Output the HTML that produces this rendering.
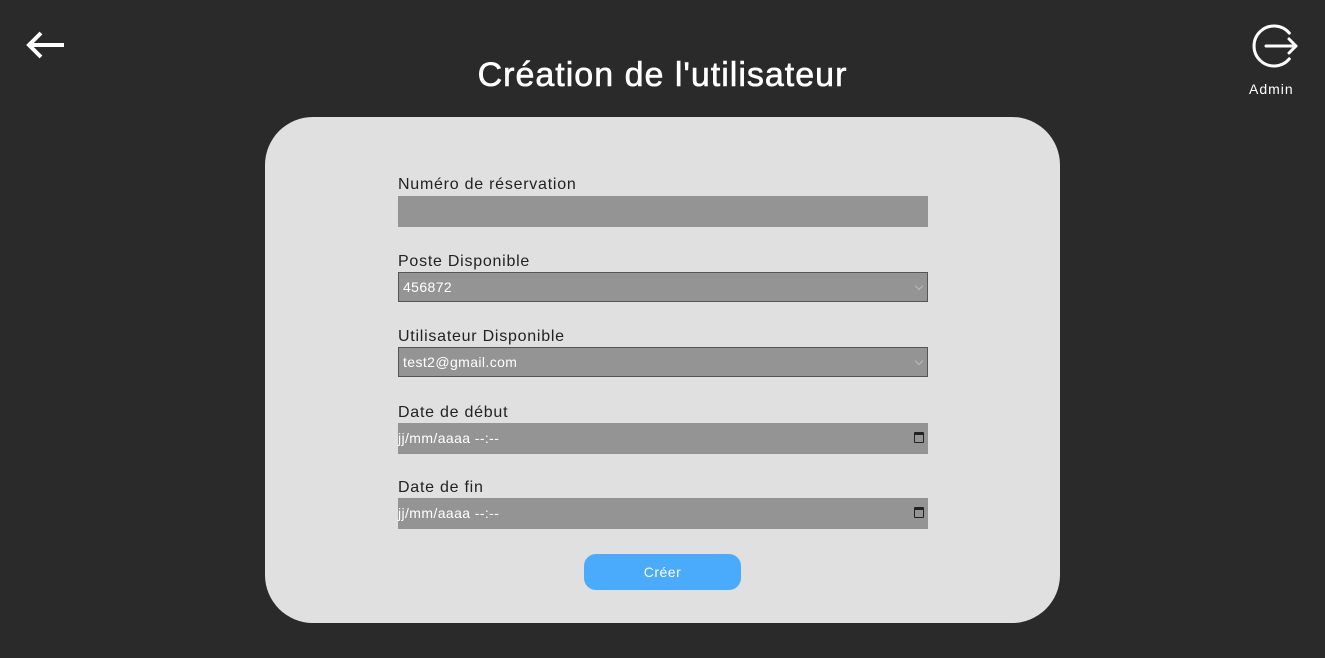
<!DOCTYPE html>
<html><head><meta charset="utf-8"><style>
*{margin:0;padding:0;box-sizing:border-box}
body{width:1325px;height:658px;background:#2a2a2a;font-family:"Liberation Sans",sans-serif;position:relative;overflow:hidden}
h1{position:absolute;left:0;width:1325px;top:56px;text-align:center;color:#fff;font-size:34px;font-weight:normal;letter-spacing:1px;-webkit-text-stroke:0.6px #fff}
.card{position:absolute;left:265px;top:117px;width:795px;height:506px;background:#e0e0e0;border-radius:48px}
.lbl{position:absolute;left:398px;color:#222;font-size:16px;letter-spacing:0.75px}
.fld{position:absolute;left:398px;width:530px;height:31px;background:#949494;color:#fff;font-size:14px;letter-spacing:0.4px;padding-left:4px;line-height:30px}
.sel{border:1px solid #555;height:30px;line-height:28px}
.chev{position:absolute;right:5px;top:10px;width:6px;height:6px;border-right:1px solid #bbb;border-bottom:1px solid #bbb;transform:rotate(45deg)}
.cal{position:absolute;right:4px;top:9px;width:10px;height:11px;border:1.5px solid #222;border-top-width:3px;border-radius:1px}
.btn{position:absolute;left:584px;top:554px;width:157px;height:36px;background:#4aabfc;border-radius:12px;color:#fff;font-size:14px;letter-spacing:0.5px;text-align:center;line-height:36px}
</style></head><body>
<svg style="position:absolute;left:26px;top:30px" width="40" height="30" viewBox="0 0 40 30"><path d="M38 15H3M15 3L3 15L15 27" stroke="#fff" stroke-width="4" fill="none"/></svg>
<svg style="position:absolute;left:1248px;top:22px" width="52" height="50" viewBox="0 0 52 50"><path d="M41.3 11.1A20 20 0 1 0 41.3 36.9" stroke="#fff" stroke-width="3" fill="none" stroke-linecap="round"/><path d="M18 24H48M41 17L48 24L41 31" stroke="#fff" stroke-width="3" fill="none" stroke-linecap="round" stroke-linejoin="round"/></svg>
<div style="position:absolute;left:1249px;top:81px;color:#fff;font-size:14px;letter-spacing:1px">Admin</div>
<h1>Création de l'utilisateur</h1>
<div class="card"></div>
<div class="lbl" style="top:176px">Numéro de réservation</div>
<div class="fld" style="top:196px"></div>
<div class="lbl" style="top:253px">Poste Disponible</div>
<div class="fld sel" style="top:272px">456872<span class="chev"></span></div>
<div class="lbl" style="top:328px">Utilisateur Disponible</div>
<div class="fld sel" style="top:347px">test2@gmail.com<span class="chev"></span></div>
<div class="lbl" style="top:404px">Date de début</div>
<div class="fld" style="top:423px;padding-left:0">jj/mm/aaaa --:--<span class="cal"></span></div>
<div class="lbl" style="top:479px">Date de fin</div>
<div class="fld" style="top:498px;padding-left:0">jj/mm/aaaa --:--<span class="cal"></span></div>
<div class="btn">Créer</div>
</body></html>
